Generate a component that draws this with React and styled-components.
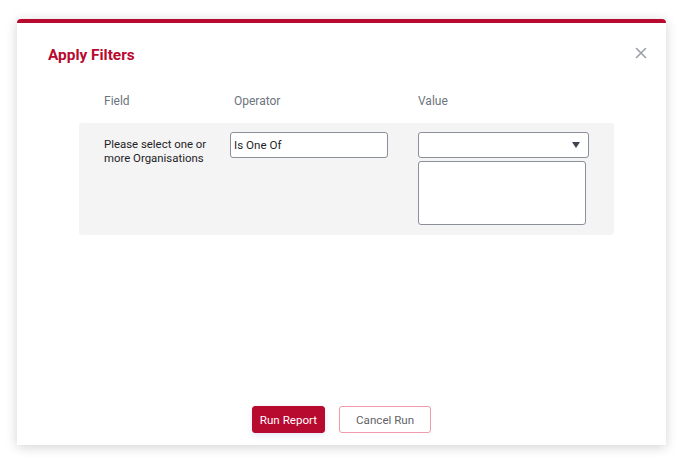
import React from "react";
import styled, { createGlobalStyle } from "styled-components";

const GlobalStyle = createGlobalStyle`
  html, body {
    margin: 0;
    background: #ffffff;
    font-family: Roboto, "Liberation Sans", sans-serif;
  }
`;

const Page = styled.div`
  padding: 19px 22px 20px 17px;
`;

const Modal = styled.div`
  height: 426px;
  box-sizing: border-box;
  background: #fff;
  border-top: 4px solid #b8092f;
  border-radius: 4px 4px 0 0;
  box-shadow: 0 2px 12px rgba(0, 0, 0, 0.18);
  display: flex;
  flex-direction: column;
  padding: 0 0 12px;
`;

const Header = styled.div`
  display: flex;
  justify-content: space-between;
  align-items: center;
  padding: 23px 19px 0 31px;
`;

const Title = styled.h2`
  margin: 0;
  font-size: 15.4px;
  font-weight: 700;
  color: #b8092f;
`;

const Close = styled.button`
  border: none;
  background: none;
  padding: 0;
  width: 12px;
  height: 12px;
  display: flex;
  margin-top: -4px;
  cursor: pointer;
`;

const Columns = styled.div`
  display: grid;
  grid-template-columns: 126px 188px 1fr;
  padding: 0 0 0 87px;
  margin-top: 30px;
`;

const ColHead = styled.div`
  font-size: 12px;
  color: #6c757d;
  padding-left: ${(p) => p.$indent || 0}px;
`;

const Panel = styled.div`
  margin: 15px 52px 0 62px;
  background: #f4f4f4;
  border-radius: 3px;
  padding: 9px 25px 10px;
  display: grid;
  grid-template-columns: 126px 188px 1fr;
`;

const FieldLabel = styled.div`
  font-size: 11.4px;
  line-height: 14px;
  color: #1f2328;
  padding-top: 5px;
`;

const TextInput = styled.div`
  width: 158px;
  height: 26px;
  box-sizing: border-box;
  border: 1px solid #8a8f99;
  border-radius: 3px;
  background: #fff;
  font-size: 11.6px;
  color: #1f2328;
  display: flex;
  align-items: center;
  padding-left: 3px;
`;

const ValueCol = styled.div`
  display: flex;
  flex-direction: column;
  gap: 3px;
`;

const Select = styled.div`
  width: 171px;
  height: 26px;
  box-sizing: border-box;
  border: 1px solid #8a8f99;
  border-radius: 3px;
  background: #fff;
  display: flex;
  align-items: center;
  justify-content: flex-end;
  padding-right: 8px;
`;

const Caret = styled.span`
  width: 0;
  height: 0;
  border-left: 4.5px solid transparent;
  border-right: 4.5px solid transparent;
  border-top: 6px solid #3d4350;
`;

const ListBox = styled.div`
  width: 168px;
  height: 64px;
  box-sizing: border-box;
  border: 1px solid #8a8f99;
  border-radius: 3px;
  background: #fff;
`;

const Footer = styled.div`
  margin-top: auto;
  display: flex;
  justify-content: center;
  gap: 14px;
`;

const Button = styled.button`
  height: 27px;
  box-sizing: border-box;
  border-radius: 3px;
  font-family: Roboto, "Liberation Sans", sans-serif;
  font-size: 11.6px;
  padding: 0 ${(p) => (p.$primary ? 7 : 16)}px;
  border: 1px solid ${(p) => (p.$primary ? "#b8092f" : "#f19aaa")};
  background: ${(p) => (p.$primary ? "#b8092f" : "#fff")};
  color: ${(p) => (p.$primary ? "#fff" : "#5f6368")};
  box-shadow: ${(p) => (p.$primary ? "0 2px 6px rgba(80, 90, 200, 0.15)" : "none")};
  cursor: pointer;
`;

export default function App() {
  return (
    <Page>
      <GlobalStyle />
      <Modal>
        <Header>
          <Title>Apply Filters</Title>
          <Close aria-label="Close">
            <svg width="12" height="12" viewBox="0 0 12 12">
              <path d="M1.5 1.5 L10.5 10.5 M10.5 1.5 L1.5 10.5" stroke="#9aa0a6" strokeWidth="1.6" strokeLinecap="round" />
            </svg>
          </Close>
        </Header>
        <Columns>
          <ColHead>Field</ColHead>
          <ColHead $indent={4}>Operator</ColHead>
          <ColHead>Value</ColHead>
        </Columns>
        <Panel>
          <FieldLabel>
            Please select one or
            <br />
            more Organisations
          </FieldLabel>
          <div>
            <TextInput>Is One Of</TextInput>
          </div>
          <ValueCol>
            <Select>
              <Caret />
            </Select>
            <ListBox />
          </ValueCol>
        </Panel>
        <Footer>
          <Button $primary>Run Report</Button>
          <Button>Cancel Run</Button>
        </Footer>
      </Modal>
    </Page>
  );
}
